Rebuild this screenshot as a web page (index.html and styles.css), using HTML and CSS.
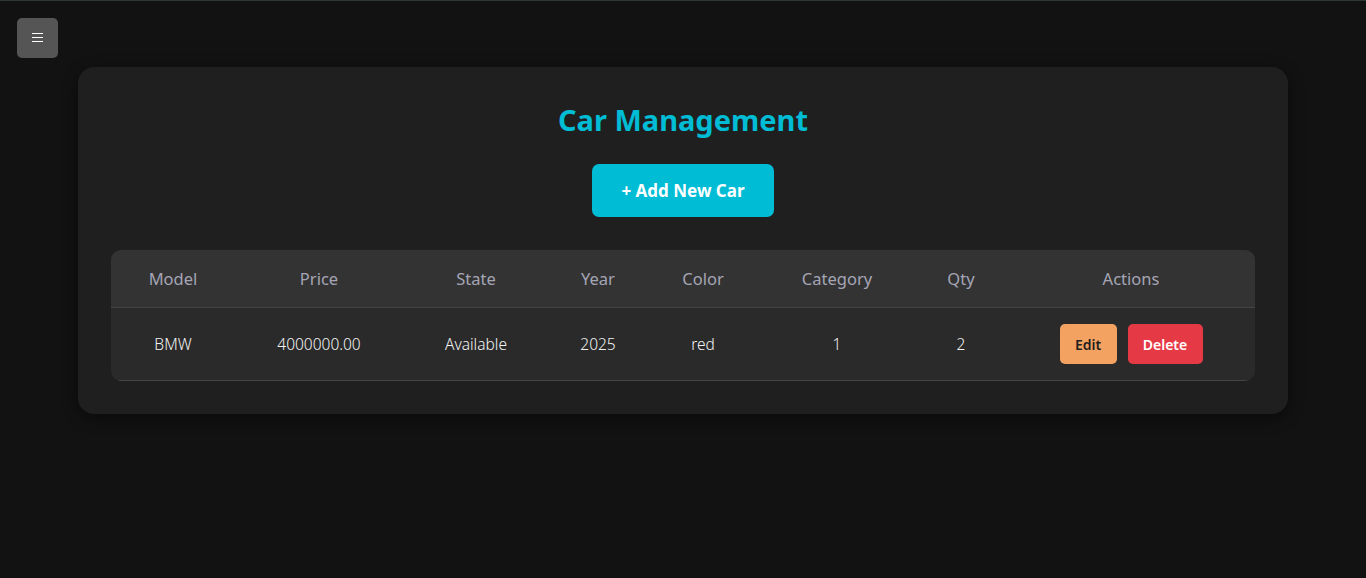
FILE: index.html
```html
<!DOCTYPE html>
<html lang="en">
<head>
<meta charset="utf-8">
<title>Car Management</title>
<link rel="stylesheet" href="styles.css">
</head>
<body>
<button class="menu-btn" aria-label="Menu">
  <svg width="11" height="10" viewBox="0 0 11 10"><path d="M0 0.5H11M0 4.5H11M0 8.5H11" stroke="#fff" stroke-width="1"/></svg>
</button>
<main class="card">
  <h2 class="title">Car Management</h2>
  <div class="add-wrap"><button class="add-btn">+ Add New Car</button></div>
  <table class="cars">
    <colgroup>
      <col class="c-model"><col class="c-price"><col class="c-state"><col class="c-year"><col class="c-color"><col class="c-cat"><col class="c-qty"><col class="c-act">
    </colgroup>
    <thead>
      <tr><th>Model</th><th>Price</th><th>State</th><th>Year</th><th>Color</th><th>Category</th><th>Qty</th><th>Actions</th></tr>
    </thead>
    <tbody>
      <tr>
        <td>BMW</td><td>4000000.00</td><td>Available</td><td>2025</td><td>red</td><td>1</td><td>2</td>
        <td><div class="actions"><button class="btn-edit">Edit</button><button class="btn-del">Delete</button></div></td>
      </tr>
    </tbody>
  </table>
</main>
</body>
</html>
```
FILE: styles.css
```css
html, body {
  margin: 0;
  padding: 0;
}
body {
  background: #121212;
  border-top: 1px solid #2c3a33;
  min-height: 577px;
  font-family: "Noto Sans", "Open Sans", sans-serif;
  color: #f0f0f0;
}
.menu-btn {
  position: fixed;
  top: 18px;
  left: 17px;
  width: 41px;
  height: 40px;
  border: none;
  border-radius: 5px;
  background: #555555;
  display: flex;
  align-items: center;
  justify-content: center;
  padding: 0;
  cursor: pointer;
}
.card {
  width: 1210px;
  box-sizing: border-box;
  margin: 66px auto 0;
  padding: 33px 33px 33px;
  background: #1f1f1f;
  border-radius: 16px;
  box-shadow: 0 4px 16px rgba(0,0,0,0.45);
}
.title {
  margin: 0 0 24px;
  text-align: center;
  color: #00bcd4;
  font-size: 29px;
  line-height: 40px;
  font-weight: 700;
}
.add-wrap {
  display: flex;
  justify-content: center;
  margin-bottom: 33px;
}
.add-btn {
  width: 182px;
  height: 53px;
  border: none;
  border-radius: 7px;
  background: #00bcd4;
  color: #ffffff;
  font-family: inherit;
  font-size: 17px;
  font-weight: 700;
  padding-top: 1px;
  cursor: pointer;
}
.cars {
  width: 100%;
  table-layout: fixed;
  border-collapse: separate;
  border-spacing: 0;
  border-radius: 10px;
  overflow: hidden;
  background: #2a2a2a;
}
.c-model { width: 124px; }
.c-price { width: 168px; }
.c-state { width: 146px; }
.c-year { width: 98px; }
.c-color { width: 112px; }
.c-cat { width: 156px; }
.c-qty { width: 92px; }
.c-act { width: 248px; }
.cars th {
  background: #333333;
  color: #a5a5b5;
  font-weight: 400;
  font-size: 16.5px;
  line-height: 22px;
  height: 57px;
  padding: 0;
  border-bottom: 1px solid #444444;
  text-align: center;
}
.cars td {
  height: 72px;
  padding: 0;
  text-align: center;
  font-size: 15.5px;
  font-weight: 300;
  color: #f2f2f2;
  border-bottom: 1px solid #444444;
}
.actions {
  display: flex;
  justify-content: center;
  gap: 11px;
}
.btn-edit, .btn-del {
  height: 40px;
  border: none;
  border-radius: 5px;
  font-family: inherit;
  font-size: 14px;
  font-weight: 600;
  cursor: pointer;
  padding: 0;
}
.btn-edit {
  width: 57px;
  background: #f4a261;
  color: #1e1e1e;
}
.btn-del {
  width: 75px;
  background: #e63946;
  color: #ffffff;
}
```
